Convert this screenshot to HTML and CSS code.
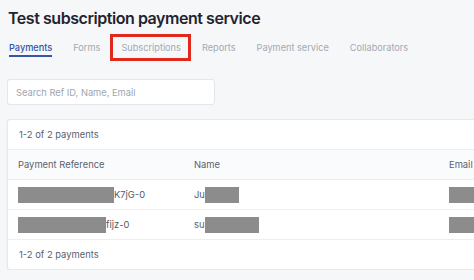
FILE: index.html
```html
<!DOCTYPE html>
<html>
<head>
<meta charset="utf-8">
<link rel="stylesheet" href="styles.css">
</head>
<body>
<div class="page">
  <h1 class="title">Test subscription payment service</h1>
  <nav class="tabs">
    <span class="tab active">Payments</span>
    <span class="tab">Forms</span>
    <span class="tab highlighted">Subscriptions</span>
    <span class="tab">Reports</span>
    <span class="tab">Payment service</span>
    <span class="tab">Collaborators</span>
  </nav>
  <div class="search"><span class="placeholder">Search Ref ID, Name, Email</span></div>
  <div class="card">
    <div class="card-head">1-2 of 2 payments</div>
    <div class="row header">
      <div class="cell">Payment Reference</div>
      <div class="cell">Name</div>
      <div class="cell">Email</div>
    </div>
    <div class="row">
      <div class="cell"><span class="redact" style="width:96px"></span>K7jG-0</div>
      <div class="cell">Ju<span class="redact" style="width:34px"></span></div>
      <div class="cell"><span class="redact" style="width:30px"></span></div>
    </div>
    <div class="row">
      <div class="cell"><span class="redact" style="width:88px"></span>fijz-0</div>
      <div class="cell">su<span class="redact" style="width:54px"></span></div>
      <div class="cell"><span class="redact" style="width:30px"></span></div>
    </div>
    <div class="card-foot">1-2 of 2 payments</div>
  </div>
</div>
</body>
</html>
```
FILE: styles.css
```css
html, body {
  margin: 0;
  padding: 0;
  overflow: hidden;
  background: #f6f7f9;
  font-family: Inter, "Noto Sans", sans-serif;
}
.page {
  padding: 6px 0 0 7px;
}
.title {
  margin: 0 0 0 1px;
  font-size: 16px;
  font-weight: 600;
  color: #1f2430;
  line-height: 24px;
  letter-spacing: -0.45px;
}
.tabs {
  display: flex;
  gap: 21px;
  margin: 11px 0 0 2px;
  height: 25px;
}
.tab {
  position: relative;
  font-size: 9.2px;
  color: #a3a9b4;
  line-height: 14px;
  height: 14px;
}
.tab.active {
  color: #2f56a6;
  font-weight: 500;
  border-bottom: 2px solid #3657a8;
}
.tab.highlighted::after {
  content: "";
  position: absolute;
  left: -11px;
  right: -10px;
  top: -7px;
  height: 21px;
  border: 3px solid #e0281c;
}
.search {
  margin-top: 13px;
  background: #fff;
  border: 1px solid #e3e6ea;
  border-radius: 3px;
  display: flex;
  align-items: center;
  padding-left: 8px;
  box-sizing: border-box;
  width: 208px;
  height: 26px;
}
.placeholder {
  font-size: 9.3px;
  color: #a0a5ae;
}
.card {
  margin-top: 14px;
  width: 500px;
  background: #fff;
  border: 1px solid #e6e8ec;
  border-radius: 3px;
  box-shadow: 0 1px 2px rgba(0,0,0,0.06);
}
.card-head, .card-foot {
  height: 29px;
  display: flex;
  align-items: center;
  padding-left: 11px;
  font-size: 9.4px;
  color: #5a6170;
}
.card-head {
  border-bottom: 1px solid #eceef1;
}
.row {
  display: grid;
  grid-template-columns: 176px 255px auto;
  height: 29px;
  align-items: center;
  border-bottom: 1px solid #eceef1;
  font-size: 9.4px;
  color: #555b66;
  padding-left: 10px;
}
.row.header {
  background: #fafbfc;
  color: #5a6170;
}
.cell {
  display: flex;
  align-items: center;
  white-space: nowrap;
}
.redact {
  display: inline-block;
  height: 16px;
  background: #8c8c8c;
}
```
